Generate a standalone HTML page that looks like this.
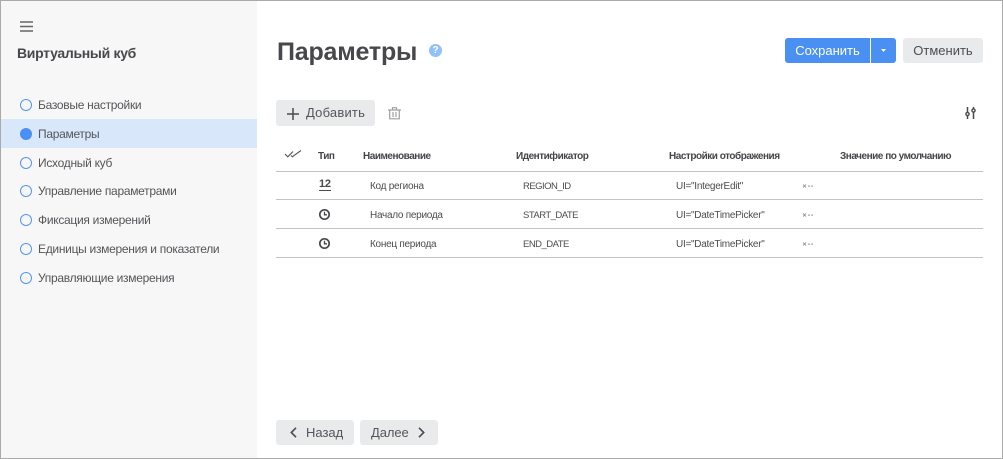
<!DOCTYPE html>
<html lang="ru"><head><meta charset="utf-8"><style>
*{box-sizing:border-box}
html,body{margin:0;padding:0;width:1003px;height:459px;overflow:hidden;background:#fff;font-family:"Liberation Sans",sans-serif;color:#4a4a4f}
.t{position:absolute;white-space:nowrap;line-height:16px}
#frame{position:absolute;left:0;top:0;width:1003px;height:459px;border:1px solid #aaa;pointer-events:none}
#side{position:absolute;left:1px;top:1px;width:256px;height:457px;background:#f7f7f7}
#act{position:absolute;left:1px;top:119px;width:256px;height:29px;background:#d8e7fa}
.r{position:absolute;left:20px;width:12px;height:12px;border:1.2px solid #5596f3;border-radius:50%}
.n{font-size:12px;left:38px;letter-spacing:-.29px;color:#55555a}
.btn{position:absolute;background:#e9eaec;border-radius:3px}
.h{font-size:10px;font-weight:bold;top:149px;color:#45454a;letter-spacing:-.48px}
.c{font-size:10px;color:#4c4c50;letter-spacing:-.27px}
.u{font-size:9.5px;letter-spacing:-.52px}
.l{position:absolute;left:276px;width:707px;height:1px;background:#c4c4c4}
svg{position:absolute;overflow:visible}
</style></head><body>
<div id="side"></div><div id="act"></div>

<svg style="left:20px;top:21px" width="14" height="11"><path d="M0 1h13M0 5.500h13M0 10h13" stroke="#666" stroke-width="1.400" fill="none"/></svg>
<div class="t" style="left:17px;top:45px;font-size:14px;font-weight:bold;color:#47474c;letter-spacing:-.3px">Виртуальный куб</div>

<div class="r" style="top:99px"></div><div class="t n" style="top:97px">Базовые настройки</div>
<div class="r" style="top:128px;background:#4a90f2;border-color:#4a90f2"></div><div class="t n" style="top:126px">Параметры</div>
<div class="r" style="top:157px"></div><div class="t n" style="top:155px">Исходный куб</div>
<div class="r" style="top:185px"></div><div class="t n" style="top:183px">Управление параметрами</div>
<div class="r" style="top:214px"></div><div class="t n" style="top:212px">Фиксация измерений</div>
<div class="r" style="top:243px"></div><div class="t n" style="top:241px">Единицы измерения и показатели</div>
<div class="r" style="top:272px"></div><div class="t n" style="top:270px">Управляющие измерения</div>

<div class="t" style="left:277px;top:38px;font-size:25px;line-height:28px;font-weight:bold;color:#47474c;letter-spacing:-.2px">Параметры</div>
<div style="position:absolute;left:429px;top:44px;width:13px;height:13px;border-radius:50%;background:#92c0f8;color:#fff;font-size:10px;font-weight:bold;line-height:13px;text-align:center">?</div>

<div style="position:absolute;left:785px;top:38px;width:85px;height:25px;background:#4a90f2;border-radius:3px 0 0 3px;color:#fff;font-size:13px;line-height:25px;text-align:center">Сохранить</div>
<div style="position:absolute;left:871px;top:38px;width:25px;height:25px;background:#4a90f2;border-radius:0 3px 3px 0"></div>
<svg style="left:881px;top:49px" width="6" height="4"><path d="M0 0h5L2.500 3z" fill="#fff"/></svg>
<div class="btn" style="left:903px;top:38px;width:80px;height:25px;font-size:13px;line-height:25px;text-align:center;color:#4d4d52">Отменить</div>

<div class="btn" style="left:276px;top:100px;width:99px;height:26px"></div>
<svg style="left:287px;top:107px" width="13" height="13"><path d="M6 1v12M0 7h12" stroke="#4a4a4f" stroke-width="1.500" fill="none"/></svg>
<div class="t" style="left:306px;top:105px;font-size:13px;color:#55555a;letter-spacing:.2px">Добавить</div>
<svg style="left:388px;top:107px" width="13" height="13"><path d="M0 3h13M4.500 2.500V.700h4v1.800M1.700 3v8.800h9.600V3M5 5v5M8 5v5" stroke="#a0a0a2" stroke-width="1.200" fill="none"/></svg>
<svg style="left:965px;top:107px" width="12" height="13"><path d="M2.500 0v5M2.500 8.500V12M8.500 0v1.500M8.500 5.500V12" stroke="#4a4a4f" stroke-width="1.500" fill="none"/><circle cx="2.500" cy="7" r="1.600" fill="none" stroke="#4a4a4f" stroke-width="1.400"/><circle cx="8.500" cy="3.500" r="1.600" fill="none" stroke="#4a4a4f" stroke-width="1.400"/></svg>

<svg style="left:285px;top:150px" width="16" height="8"><path d="M0 4l2.800 2.800L8 1.500M6 5.500l1.300 1.300L16 .500" stroke="#55555a" stroke-width="1.100" fill="none"/></svg>
<div class="t h" style="left:318px">Тип</div>
<div class="t h" style="left:363px">Наименование</div>
<div class="t h" style="left:516px">Идентификатор</div>
<div class="t h" style="left:669px">Настройки отображения</div>
<div class="t h" style="left:840px">Значение по умолчанию</div>

<div class="l" style="top:171px"></div><div class="l" style="top:199px"></div><div class="l" style="top:228px"></div><div class="l" style="top:257px"></div>

<div class="t" style="left:319px;top:177px;font-size:11px;font-weight:bold;color:#4a4a4f;line-height:14px;border-bottom:1px solid #4a4a4f;height:14px;letter-spacing:-.3px">12</div>
<svg style="left:319px;top:209px" width="11" height="11"><circle cx="5.500" cy="5.500" r="4.700" fill="none" stroke="#47474c" stroke-width="1.700"/><path d="M5.500 2.800v3h2.500" fill="none" stroke="#47474c" stroke-width="1.300"/></svg>
<svg style="left:319px;top:238px" width="11" height="11"><circle cx="5.500" cy="5.500" r="4.700" fill="none" stroke="#47474c" stroke-width="1.700"/><path d="M5.500 2.800v3h2.500" fill="none" stroke="#47474c" stroke-width="1.300"/></svg>

<div class="t c" style="left:370px;top:179px">Код региона</div>
<div class="t c" style="left:370px;top:208px">Начало периода</div>
<div class="t c" style="left:370px;top:237px">Конец периода</div>
<div class="t c u" style="left:523px;top:179px">REGION_ID</div>
<div class="t c u" style="left:523px;top:208px">START_DATE</div>
<div class="t c u" style="left:523px;top:237px">END_DATE</div>
<div class="t c" style="left:676px;top:179px">UI="IntegerEdit"</div>
<div class="t c" style="left:676px;top:208px">UI="DateTimePicker"</div>
<div class="t c" style="left:676px;top:237px">UI="DateTimePicker"</div>
<svg style="left:803px;top:184px" width="10" height="4"><path d="M0 .500l3 3M3 .500l-3 3" stroke="#777" stroke-width=".7" fill="none"/><path d="M5 1.500h2v1.200H5zM8 1.500h2v1.200H8z" fill="#aaa"/></svg>
<svg style="left:803px;top:213px" width="10" height="4"><path d="M0 .500l3 3M3 .500l-3 3" stroke="#777" stroke-width=".7" fill="none"/><path d="M5 1.500h2v1.200H5zM8 1.500h2v1.200H8z" fill="#aaa"/></svg>
<svg style="left:803px;top:242px" width="10" height="4"><path d="M0 .500l3 3M3 .500l-3 3" stroke="#777" stroke-width=".7" fill="none"/><path d="M5 1.500h2v1.200H5zM8 1.500h2v1.200H8z" fill="#aaa"/></svg>

<div class="btn" style="left:276px;top:420px;width:78px;height:25px"></div>
<svg style="left:290px;top:427px" width="7" height="11"><path d="M6 .8L1.300 5.500 6 10.200" stroke="#4a4a4f" stroke-width="1.600" fill="none"/></svg>
<div class="t" style="left:306px;top:425px;font-size:13px;color:#55555a;letter-spacing:0">Назад</div>
<div class="btn" style="left:360px;top:420px;width:78px;height:25px"></div>
<div class="t" style="left:371px;top:425px;font-size:13px;color:#55555a;letter-spacing:-.1px">Далее</div>
<svg style="left:418px;top:427px" width="7" height="11"><path d="M1 .8L5.700 5.500 1 10.200" stroke="#4a4a4f" stroke-width="1.600" fill="none"/></svg>

<div id="frame"></div>
</body></html>
